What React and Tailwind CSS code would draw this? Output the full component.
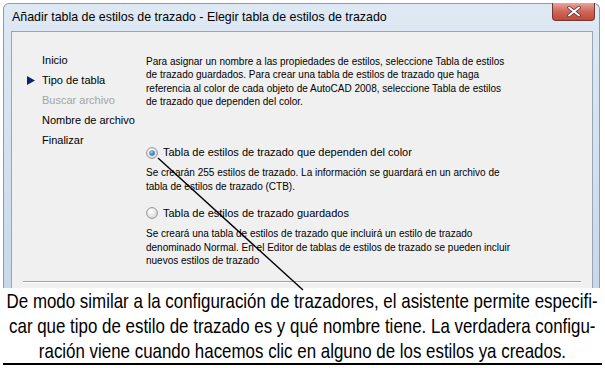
import React from "react";

const nav = [
  { t: "Inicio" },
  { t: "Tipo de tabla", active: true },
  { t: "Buscar archivo", disabled: true },
  { t: "Nombre de archivo" },
  { t: "Finalizar" },
];

function Radio({ checked }) {
  return (
    <svg width="12" height="12" viewBox="0 0 12 12" className="shrink-0">
      <defs>
        <radialGradient id={checked ? "rg1" : "rg2"} cx="0.4" cy="0.35" r="0.7">
          <stop offset="0" stopColor="#ffffff" />
          <stop offset="1" stopColor="#d8d8d8" />
        </radialGradient>
        <radialGradient id="dot" cx="0.4" cy="0.35" r="0.7">
          <stop offset="0" stopColor="#8fd0ff" />
          <stop offset="1" stopColor="#1c5c9c" />
        </radialGradient>
      </defs>
      <circle cx="6" cy="6" r="5.4" fill={`url(#${checked ? "rg1" : "rg2"})`} stroke="#8a8a8a" strokeWidth="0.9" />
      {checked && <circle cx="6" cy="6" r="2.8" fill="url(#dot)" />}
    </svg>
  );
}

const caption = [
  "De modo similar a la configuración de trazadores, el asistente permite especifi-",
  "car que tipo de estilo de trazado es y qué nombre tiene. La verdadera configu-",
  "ración viene cuando hacemos clic en alguno de los estilos ya creados.",
];

export default function App() {
  return (
    <div className="relative w-[605px] h-[368px] bg-white overflow-hidden" style={{ fontFamily: '"Liberation Sans", Arial, sans-serif' }}>
      {/* window */}
      <div className="ml-[3px] mr-[5px] pt-[3px]">
        <div className="h-[285px] rounded-t-[6px] border border-b-0 border-[#8c9cb0] bg-gradient-to-b from-[#dfe9f4] to-[#c8d8ea] flex flex-col">
          <div className="relative h-[27px] flex items-center pl-[8px] text-[12.4px] text-black">
            Añadir tabla de estilos de trazado - Elegir tabla de estilos de trazado
            <div className="absolute top-[-1px] right-[4px] w-[43px] h-[18px] rounded-b-[4px] border border-t-0 border-[#6e3a36] bg-gradient-to-b from-[#e7a499] via-[#cf6758] to-[#c4463a] flex items-center justify-center">
              <svg width="14" height="11" viewBox="0 0 14 11">
                <path d="M2 1.5 L12 9.5 M12 1.5 L2 9.5" stroke="#5a2a26" strokeWidth="3.4" strokeLinecap="round" />
                <path d="M2 1.5 L12 9.5 M12 1.5 L2 9.5" stroke="#ffffff" strokeWidth="2" strokeLinecap="round" />
              </svg>
            </div>
          </div>
          <div className="flex-1 ml-[7px] mr-[6px] border border-b-0 border-[#97a6b6] bg-[#f0f0f0] flex flex-col">
            <div className="flex-1 flex pl-[15px] pt-[18px] text-[11px] text-black">
              <div className="w-[119px] flex flex-col">
                {nav.map((n) => (
                  <div key={n.t} className="h-[20px] flex items-center">
                    <div className="w-[15px]">
                      {n.active && (
                        <svg width="8" height="9" viewBox="0 0 8 9">
                          <path d="M0 0 L8 4.5 L0 9 Z" fill="#15206e" />
                        </svg>
                      )}
                    </div>
                    <span className={n.disabled ? "text-[#a3a3a3]" : ""}>{n.t}</span>
                  </div>
                ))}
              </div>
              <div className="w-[400px] flex flex-col text-[10px] leading-[13.3px] pt-[5px] whitespace-nowrap">
                <p>
                  Para asignar un nombre a las propiedades de estilos, seleccione Tabla de estilos<br />
                  de trazado guardados. Para crear una tabla de estilos de trazado que haga<br />
                  referencia al color de cada objeto de AutoCAD 2008, seleccione Tabla de estilos<br />
                  de trazado que dependen del color.
                </p>
                <div className="mt-[38px] flex items-center gap-[5px] text-[11px]">
                  <Radio checked />
                  <span>Tabla de estilos de trazado que dependen del color</span>
                </div>
                <p className="mt-[7px] leading-[13.6px]">
                  Se crearán 255 estilos de trazado. La información se guardará en un archivo de<br />
                  tabla de estilos de trazado (CTB).
                </p>
                <div className="mt-[13px] flex items-center gap-[5px] text-[11px]">
                  <Radio />
                  <span>Tabla de estilos de trazado guardados</span>
                </div>
                <p className="mt-[7px] leading-[13.6px]">
                  Se creará una tabla de estilos de trazado que incluirá un estilo de trazado<br />
                  denominado Normal. En el Editor de tablas de estilos de trazado se pueden incluir<br />
                  nuevos estilos de trazado
                </p>
              </div>
            </div>
            <div className="mx-[11px] mb-[5px] h-[2px] border-t border-[#a0a0a0] border-b border-b-white" />
          </div>
        </div>
      </div>
      {/* caption */}
      <div className="flex flex-col items-center text-[21px] leading-[25px] text-black" style={{ fontFamily: '"Liberation Sans", Arial, sans-serif' }}>
        {caption.map((l) => (
          <div key={l} className="whitespace-nowrap scale-x-[0.805] origin-center">{l}</div>
        ))}
      </div>
      <div className="mx-[3px] mt-[0px] h-[2px] bg-black" />
      {/* pointer line */}
      <svg className="absolute left-0 top-0 pointer-events-none" width="605" height="368">
        <line x1="158" y1="158" x2="303" y2="290" stroke="#000" strokeWidth="1.4" />
      </svg>
    </div>
  );
}
